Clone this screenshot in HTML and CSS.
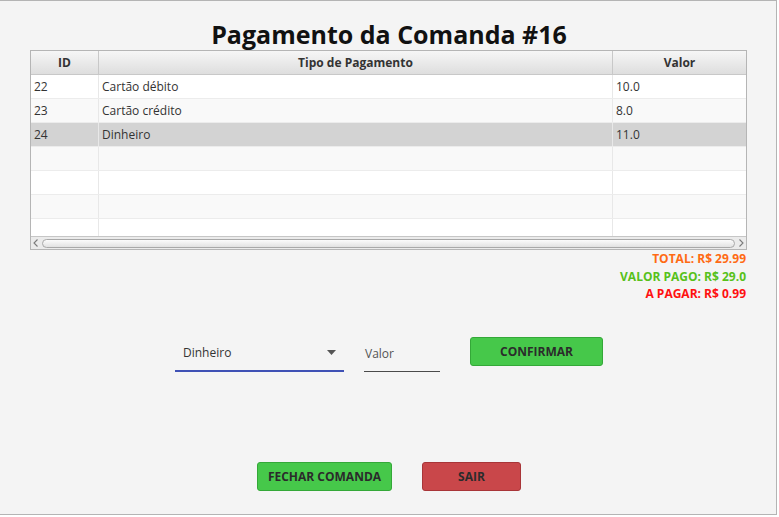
FILE: index.html
```html
<!DOCTYPE html>
<html lang="pt">
<head>
<meta charset="utf-8">
<title>Pagamento da Comanda #16</title>
<link rel="stylesheet" href="styles.css">
</head>
<body>
<div class="window">
  <h1 class="title">Pagamento da Comanda #16</h1>
  <div class="table">
    <div class="row head">
      <div class="cell c-id">ID</div>
      <div class="cell c-tipo">Tipo de Pagamento</div>
      <div class="cell c-valor">Valor</div>
    </div>
    <div class="row odd">
      <div class="cell c-id">22</div>
      <div class="cell c-tipo">Cartão débito</div>
      <div class="cell c-valor">10.0</div>
    </div>
    <div class="row even">
      <div class="cell c-id">23</div>
      <div class="cell c-tipo">Cartão crédito</div>
      <div class="cell c-valor">8.0</div>
    </div>
    <div class="row selected">
      <div class="cell c-id">24</div>
      <div class="cell c-tipo">Dinheiro</div>
      <div class="cell c-valor">11.0</div>
    </div>
    <div class="row even"><div class="cell c-id"></div><div class="cell c-tipo"></div><div class="cell c-valor"></div></div>
    <div class="row odd"><div class="cell c-id"></div><div class="cell c-tipo"></div><div class="cell c-valor"></div></div>
    <div class="row even"><div class="cell c-id"></div><div class="cell c-tipo"></div><div class="cell c-valor"></div></div>
    <div class="row odd last"><div class="cell c-id"></div><div class="cell c-tipo"></div><div class="cell c-valor"></div></div>
    <div class="scrollbar">
      <span class="arrow">
        <svg width="6" height="8" viewBox="0 0 6 8"><path d="M4.5 0.5 L1 4 L4.5 7.5" fill="none" stroke="#7a7a7a" stroke-width="1.1"/></svg>
      </span>
      <span class="thumb"></span>
      <span class="arrow">
        <svg width="6" height="8" viewBox="0 0 6 8"><path d="M1.5 0.5 L5 4 L1.5 7.5" fill="none" stroke="#7a7a7a" stroke-width="1.1"/></svg>
      </span>
    </div>
  </div>
  <div class="totals">
    <div class="total">TOTAL: R$ 29.99</div>
    <div class="pago">VALOR PAGO: R$ 29.0</div>
    <div class="apagar">A PAGAR: R$ 0.99</div>
  </div>
  <div class="form">
    <div class="combo">
      <span class="combo-text">Dinheiro</span>
      <svg class="combo-arrow" width="9" height="5" viewBox="0 0 9 5"><path d="M0 0 H9 L4.5 5 Z" fill="#555"/></svg>
    </div>
    <div class="field"><span class="placeholder">Valor</span></div>
    <button class="btn green confirm">CONFIRMAR</button>
  </div>
  <div class="actions">
    <button class="btn green fechar">FECHAR COMANDA</button>
    <button class="btn red sair">SAIR</button>
  </div>
</div>
</body>
</html>
```
FILE: styles.css
```css
html, body {
  margin: 0;
  padding: 0;
  background: #ffffff;
}
body {
  font-family: "Open Sans", "Noto Sans", sans-serif;
  color: #333333;
}
.window {
  width: 777px;
  height: 515px;
  box-sizing: border-box;
  background: #f4f4f4;
  border-top: 1px solid #b4b4b4;
  border-right: 1px solid #b4b4b4;
  border-bottom: 1px solid #b4b4b4;
  display: flex;
  flex-direction: column;
}
.title {
  margin: 17px 0 0 0;
  height: 32px;
  line-height: 32px;
  font-size: 25px;
  font-weight: 700;
  color: #111111;
  text-align: center;
  padding-left: 2px;
}
.table {
  margin-left: 30px;
  width: 717px;
  height: 200px;
  box-sizing: border-box;
  border: 1px solid #b5b5b5;
  background: #ffffff;
  display: flex;
  flex-direction: column;
}
.row {
  display: flex;
  height: 24px;
  box-sizing: border-box;
  border-bottom: 1px solid #ececec;
  font-size: 12px;
}
.row.last {
  height: 17px;
  border-bottom: none;
}
.row.head {
  background: linear-gradient(#f6f6f6, #dedede);
  border-bottom: 1px solid #c8c8c8;
  font-weight: 700;
  color: #333333;
}
.row.odd { background: #ffffff; }
.row.even { background: #f9f9f9; }
.row.selected { background: #d3d3d3; }
.cell {
  box-sizing: border-box;
  padding-left: 3px;
  display: flex;
  align-items: center;
  border-right: 1px solid #e8e8e8;
  white-space: nowrap;
}
.head .cell {
  justify-content: center;
  padding-left: 0;
  border-right: 1px solid #c8c8c8;
}
.c-id { width: 68px; }
.c-tipo { width: 514px; }
.c-valor { width: 133px; border-right: none; }
.head .c-valor { border-right: none; }
.scrollbar {
  height: 13px;
  box-sizing: border-box;
  border-top: 1px solid #c6c6c6;
  background: #ebebeb;
  display: flex;
  align-items: center;
  padding: 0 2px;
  gap: 3px;
}
.arrow {
  width: 6px;
  height: 9px;
  display: flex;
  align-items: center;
  justify-content: center;
}
.thumb {
  flex: 1;
  height: 9px;
  box-sizing: border-box;
  border: 1px solid #a9a9a9;
  border-radius: 5px;
  background: linear-gradient(#fbfbfb, #e2e2e2);
}
.totals {
  width: 746px;
  display: flex;
  flex-direction: column;
  align-items: flex-end;
  font-size: 12px;
  font-weight: 700;
  line-height: 17.5px;
  margin-top: 0;
}
.total { color: #ff6a13; }
.pago { color: #57c11a; }
.apagar { color: #ff1010; }
.form {
  display: flex;
  align-items: flex-start;
  margin-top: 34px;
  padding-left: 175px;
  height: 36px;
}
.combo {
  width: 169px;
  height: 35px;
  box-sizing: border-box;
  border-bottom: 2px solid #3f51b5;
  display: flex;
  align-items: center;
  justify-content: space-between;
  padding: 0 8px 1px 8px;
  font-size: 12px;
  color: #333333;
}
.combo-arrow {
  margin-top: -1px;
}
.field {
  margin-left: 20px;
  width: 76px;
  height: 35px;
  box-sizing: border-box;
  border-bottom: 1px solid #4a4a4a;
  display: flex;
  align-items: center;
  padding-left: 1px;
  padding-bottom: 1px;
  font-size: 12px;
}
.placeholder { color: #555555; }
.btn {
  font-family: "Open Sans", "Noto Sans", sans-serif;
  font-size: 12px;
  font-weight: 700;
  color: #2b2b2b;
  height: 29px;
  box-sizing: border-box;
  border-radius: 3px;
  padding: 0;
  cursor: pointer;
}
.green {
  background: #46c84a;
  border: 1px solid #34a838;
}
.red {
  background: #c9474a;
  border: 1px solid #a83538;
}
.confirm {
  margin-left: 30px;
  margin-top: 0;
  width: 133px;
}
.actions {
  display: flex;
  margin-top: 89px;
  padding-left: 257px;
  gap: 30px;
}
.fechar { width: 135px; }
.sair { width: 99px; }
```
